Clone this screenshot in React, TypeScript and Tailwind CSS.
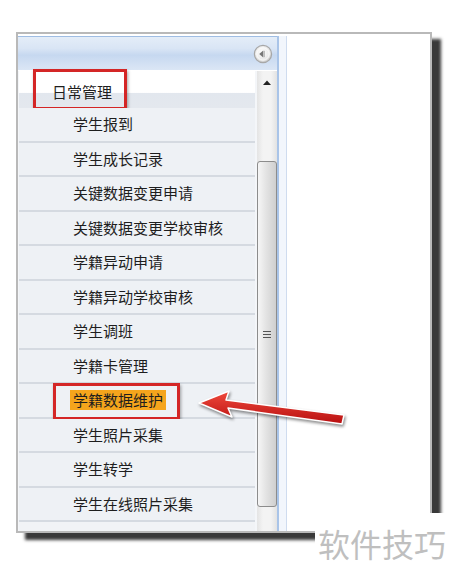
import React from "react";

const items = [
  "学生报到",
  "学生成长记录",
  "关键数据变更申请",
  "关键数据变更学校审核",
  "学籍异动申请",
  "学籍异动学校审核",
  "学生调班",
  "学籍卡管理",
  "学籍数据维护",
  "学生照片采集",
  "学生转学",
  "学生在线照片采集",
];

const font = { fontFamily: '"Noto Sans CJK SC", "Noto Sans", sans-serif' };

export default function App() {
  return (
    <div className="relative w-[450px] h-[581px] bg-white overflow-hidden pt-[32px] pl-[16px]" style={font}>
      {/* window frame */}
      <div className="w-[416px] h-[501px] border-2 border-[#b9b9b9] bg-white shadow-[9px_7px_3px_rgba(35,35,35,0.9)] pt-[2px] flex">
        {/* left panel */}
        <div className="w-[259px] h-full flex flex-col">
          {/* header */}
          <div className="h-[34px] border-t border-[#9fbde3] bg-[linear-gradient(to_bottom,#e4edf8_0%,#d9e5f5_35%,#c6d8f0_55%,#d2e0f3_80%,#dbe6f5_100%)] flex items-center justify-end pr-[4px]">
            <svg width="20" height="20" viewBox="0 0 20 20">
              <defs>
                <radialGradient id="cb" cx="45%" cy="40%" r="60%">
                  <stop offset="0%" stopColor="#ffffff" />
                  <stop offset="70%" stopColor="#e9e9e9" />
                  <stop offset="100%" stopColor="#c9c9c9" />
                </radialGradient>
              </defs>
              <circle cx="10" cy="10" r="8.6" fill="url(#cb)" stroke="#a7a7a7" strokeWidth="1.2" />
              <circle cx="10" cy="10" r="6.2" fill="none" stroke="#ffffff" strokeWidth="0.8" />
              <path d="M6.2 10 L10.2 6.6 L10.2 13.4 Z" fill="#777" />
              <rect x="10.6" y="6.8" width="1" height="6.4" fill="#999" />
            </svg>
          </div>
          {/* body */}
          <div className="flex-1 flex bg-white pt-[1px] min-h-0">
            <div className="w-[239px] pl-[1px] pr-[2px] bg-[#f4f6f9] flex flex-col">
              {/* group header */}
              <div className="relative h-[37px] bg-[linear-gradient(to_bottom,#ffffff_0%,#ffffff_58%,#e2e7ee_60%,#e4e8ee_100%)] flex items-center pl-[33px] pt-[6px] text-[15px] text-[#1e1e1e]">
                日常管理
                <div className="absolute left-[14px] top-[-2px] w-[94px] h-[41px] border-[3px] border-[#d42626] shadow-[1px_2px_3px_rgba(0,0,0,0.35)]" />
              </div>
              {items.map((t, i) => (
                <div
                  key={t}
                  className="relative h-[34.5px] shrink-0 border-b-2 border-[#d5dae1] bg-[#eef1f5] flex items-center pl-[54px] text-[15px] text-[#1e1e1e]"
                >
                  {i === 8 ? (
                    <>
                      <span className="bg-[#f5a51c] px-[3px] -ml-[3px] h-[20px] flex items-center">{t}</span>
                      <div className="absolute left-[34px] top-[-1px] w-[127px] h-[37px] border-[3px] border-[#d42626] shadow-[1px_2px_3px_rgba(0,0,0,0.35)]" />
                    </>
                  ) : (
                    t
                  )}
                </div>
              ))}
              <div className="flex-1 bg-[#f1f3f6]" />
            </div>
            {/* scrollbar */}
            <div className="w-[20px] flex flex-col bg-[linear-gradient(to_right,#e4e4e4,#f3f3f3_30%,#f3f3f3_70%,#e2e2e2)]">
              <div className="h-[22px] flex items-center justify-center">
                <svg width="8" height="5" viewBox="0 0 8 5">
                  <path d="M0 5 L4 0.5 L8 5 Z" fill="#222" />
                </svg>
              </div>
              <div className="mt-[68px] h-[346px] rounded-[3px] border border-[#8c8c8c] bg-[linear-gradient(to_right,#f6f6f6,#e3e3e3_45%,#cfcfcf)] flex items-center justify-center">
                <div className="flex flex-col gap-[2px]">
                  <div className="w-[8px] h-[1px] bg-[#555]" />
                  <div className="w-[8px] h-[1px] bg-[#555]" />
                  <div className="w-[8px] h-[1px] bg-[#555]" />
                </div>
              </div>
            </div>
          </div>
        </div>
        {/* splitter */}
        <div className="w-[10px] h-full border-l-2 border-[#a9c4e8] border-r border-r-[#cfdcef] bg-[#f2f6fc]" />
        {/* content pane */}
        <div className="flex-1 bg-white" />
      </div>

      {/* arrow annotation */}
      <svg className="absolute inset-0 pointer-events-none drop-shadow-[1px_2px_1.5px_rgba(0,0,0,0.45)]" width="450" height="581" viewBox="0 0 450 581">
        <defs>
          <linearGradient id="ar" x1="0" y1="0" x2="0" y2="1">
            <stop offset="0%" stopColor="#f04a3c" />
            <stop offset="100%" stopColor="#b80f10" />
          </linearGradient>
        </defs>
        <path
          d="M199 403 L229 391 L226 400 L344 415 L342 424 L228 408 L232 417 Z"
          fill="url(#ar)"
          stroke="#ffffff"
          strokeWidth="1.5"
          strokeLinejoin="round"
        />
      </svg>

      {/* watermark */}
      <div className="absolute left-[315px] top-[513px] w-[135px] h-[68px] bg-white flex items-start pl-[3px] pt-[10px] text-[32px] leading-[40px] text-[#bfbfbf]">
        软件技巧
      </div>
    </div>
  );
}
